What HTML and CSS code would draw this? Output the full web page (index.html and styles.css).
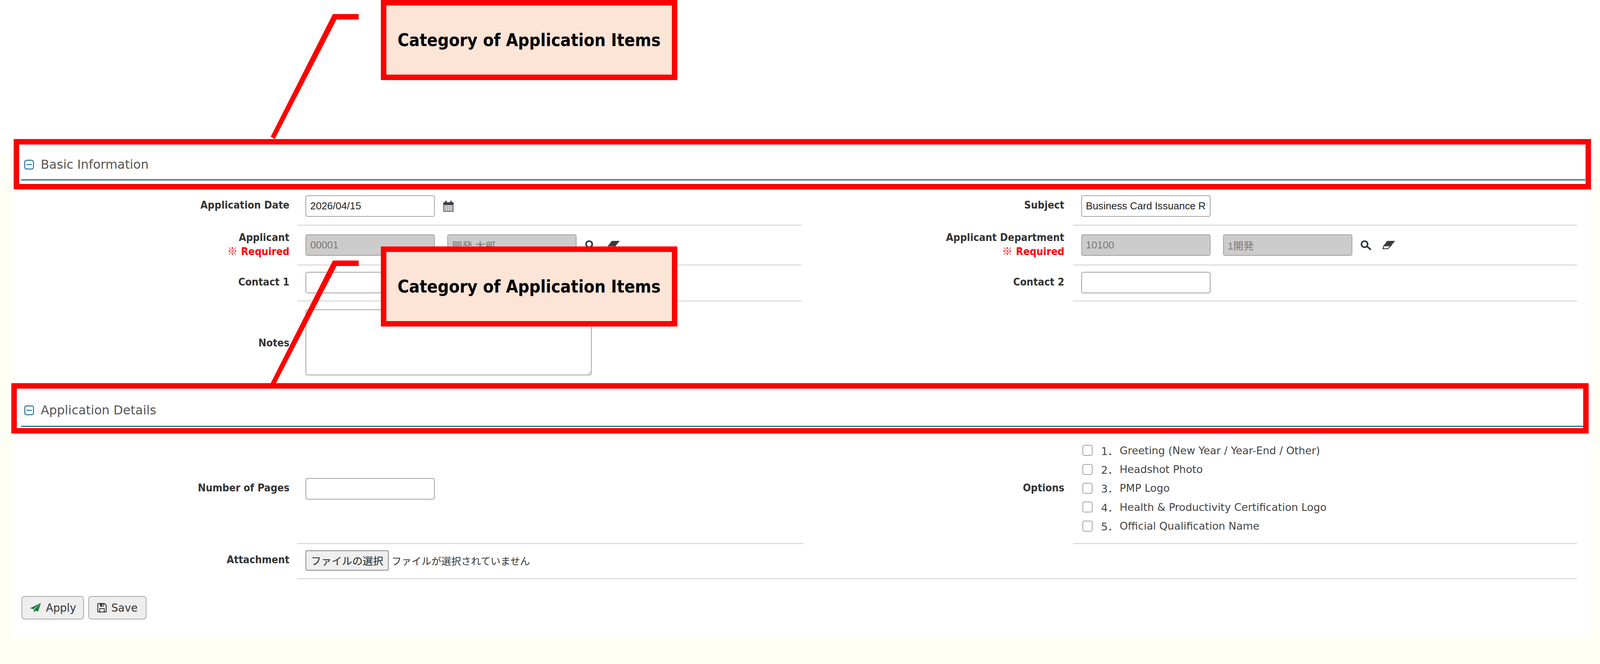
FILE: index.html
```html
<!DOCTYPE html>
<html lang="en">
<head>
<meta charset="utf-8">
<title>Business Card Issuance Request</title>
<link rel="stylesheet" href="styles.css">
</head>
<body>
<div class="top-band"></div>
<main class="sheet">
  <section class="section">
    <h2 class="heading heading-first">
      <svg class="toggle" viewBox="0 0 27 27"><rect x="1.5" y="1.5" width="24" height="24" rx="5"/><path d="M6 13.5h15"/></svg>
      <span>Basic Information</span>
    </h2>
    <div class="row row-a">
      <label class="label lab-date">Application Date</label>
      <div class="field pad-date">
        <input class="input" type="text" value="2026/04/15">
        <svg class="ic-cal" viewBox="0 0 30 31"><path class="cal-head" d="M1 5h5V1h4v4h10V1h4v4h5v8H1z"/><rect class="cal-body" x="2" y="12" width="26" height="18"/><path class="cal-grid" d="M2 16.500h26M2 21h26M2 25.500h26M7.500 12v18M13 12v18M18.500 12v18M24 12v18"/></svg>
      </div>
      <label class="label label-right lab-date">Subject</label>
      <div class="field pad-date">
        <input class="input" type="text" value="Business Card Issuance Request">
      </div>
    </div>
    <div class="row row-a">
      <label class="label lab-two">Applicant<span class="req"><span class="req-mark">※</span> Required</span></label>
      <div class="field pad-two">
        <input class="input" type="text" value="00001" disabled>
        <input class="input input-second" type="text" value="開発 太郎" disabled>
        <svg class="ic-search" viewBox="0 0 30 27"><circle cx="11" cy="11" r="8.500"/><path d="M17.500 17l9.500 8"/></svg>
        <svg class="ic-eraser" viewBox="0 0 35 23"><path class="er-top" d="M13 0h22L24 13H3z"/><path class="er-low" d="M4 13.500h19L15 21.500H1.500z"/></svg>
      </div>
      <label class="label label-right lab-two">Applicant Department<span class="req"><span class="req-mark">※</span> Required</span></label>
      <div class="field pad-two">
        <input class="input" type="text" value="10100" disabled>
        <input class="input input-second" type="text" value="1開発" disabled>
        <svg class="ic-search" viewBox="0 0 30 27"><circle cx="11" cy="11" r="8.500"/><path d="M17.500 17l9.500 8"/></svg>
        <svg class="ic-eraser" viewBox="0 0 35 23"><path class="er-top" d="M13 0h22L24 13H3z"/><path class="er-low" d="M4 13.500h19L15 21.500H1.500z"/></svg>
      </div>
    </div>
    <div class="row row-a">
      <label class="label lab-contact">Contact 1</label>
      <div class="field pad-contact"><input class="input" type="text"></div>
      <label class="label label-right lab-contact">Contact 2</label>
      <div class="field pad-contact"><input class="input" type="text"></div>
    </div>
    <div class="row row-a">
      <label class="label lab-notes">Notes</label>
      <div class="field field-plain pad-notes"><textarea class="textarea"></textarea></div>
    </div>
  </section>

  <section class="section">
    <h2 class="heading heading-second">
      <svg class="toggle" viewBox="0 0 27 27"><rect x="1.5" y="1.5" width="24" height="24" rx="5"/><path d="M6 13.5h15"/></svg>
      <span>Application Details</span>
    </h2>
    <div class="row row-b">
      <label class="label lab-pages">Number of Pages</label>
      <div class="field pad-pages"><input class="input" type="text"></div>
      <label class="label label-right lab-pages">Options</label>
      <div class="field field-options">
        <label class="option"><input class="check" type="checkbox"><span class="num">1．</span>Greeting (New Year / Year-End / Other)</label>
        <label class="option"><input class="check" type="checkbox"><span class="num">2．</span>Headshot Photo</label>
        <label class="option"><input class="check" type="checkbox"><span class="num">3．</span>PMP Logo</label>
        <label class="option"><input class="check" type="checkbox"><span class="num">4．</span>Health &amp; Productivity Certification Logo</label>
        <label class="option"><input class="check" type="checkbox"><span class="num">5．</span>Official Qualification Name</label>
      </div>
    </div>
    <div class="row row-b">
      <label class="label lab-attach">Attachment</label>
      <div class="field field-wide pad-attach">
        <button class="file-btn" type="button">ファイルの選択</button>
        <span class="file-text">ファイルが選択されていません</span>
      </div>
    </div>
  </section>

  <div class="actions">
    <button class="btn btn-apply" type="button">
      <svg class="ic-plane" viewBox="0 0 31 28"><path d="M31 0L0 15l9 3.500z"/><path d="M31 0L11 19.500V28l4.500-6 7 3z"/></svg>
      Apply
    </button>
    <button class="btn btn-save" type="button">
      <svg class="ic-save" viewBox="0 0 26 26"><path class="sv-o" d="M3 1.500h16.500L24.500 6.500V23a1.500 1.500 0 0 1-1.500 1.500H3A1.500 1.500 0 0 1 1.500 23V3A1.500 1.500 0 0 1 3 1.500z"/><path class="sv-f" d="M7 2h11v8H7zM5.500 14h15v10h-15z"/><path class="sv-w" d="M13.500 3.500h2.500v5h-2.500zM8 16.500h10v7H8z"/></svg>
      Save
    </button>
  </div>
</main>

<aside class="note note-one">
  <svg class="leader" viewBox="0 0 243 320" preserveAspectRatio="none"><polygon points="171,0 242,0 242,14 181,14 11,320 0,314"/></svg>
  <div class="callout">Category of Application Items</div>
</aside>
<div class="frame frame-one"></div>
<aside class="note note-two">
  <svg class="leader" viewBox="0 0 243 320" preserveAspectRatio="none"><polygon points="171,0 242,0 242,14 181,14 11,320 0,314"/></svg>
  <div class="callout">Category of Application Items</div>
</aside>
<div class="frame frame-two"></div>
</body>
</html>
```
FILE: styles.css
```css
/* The brief states a 4400px window, but the sandbox reports a 4096px viewport.
   Horizontal measures and font sizes are written in 4400ths of the viewport width
   so the page is exact at 4400 and is not clipped at 4096. */
:root { --u: calc(100vw / 4400); }
* { box-sizing: border-box; }
html, body { margin: 0; padding: 0; }
body {
  position: relative;
  width: 100vw;
  height: 1700px;
  overflow: hidden;
  background: #fffff6;
  color: #333;
  font-family: "DejaVu Sans", "Noto Sans CJK JP", sans-serif;
}
.top-band { height: 389px; background: #fff; }
.sheet {
  width: calc(4344 * var(--u));
  height: 1244px;
  margin-left: calc(36 * var(--u));
  padding: 0 calc(21 * var(--u)) 0 calc(22 * var(--u));
  background: #fff;
}
.heading {
  display: flex;
  align-items: center;
  gap: calc(18 * var(--u));
  margin: 0;
  height: 27px;
  box-sizing: content-box;
  border-bottom: 3px solid #22708f;
  font-size: calc(33.9 * var(--u));
  font-weight: 400;
  line-height: 27px;
  color: #555;
  padding-left: calc(9 * var(--u));
}
.heading-first { padding-top: 19px; padding-bottom: 24px; }
.heading-second { padding-top: 76px; padding-bottom: 26px; }
.toggle { width: calc(27 * var(--u)); height: 27px; flex: none; fill: none; stroke: #1d7296; stroke-width: 2.6; }

.row { display: grid; }
.row-a { grid-template-columns: calc(760 * var(--u)) calc(1386 * var(--u)) calc(747 * var(--u)) calc(1386 * var(--u)); }
.row-b { grid-template-columns: calc(760 * var(--u)) calc(1392 * var(--u)) calc(741 * var(--u)) calc(1386 * var(--u)); }

.label {
  display: flex;
  flex-direction: column;
  justify-content: flex-start;
  padding-right: calc(22 * var(--u));
  text-align: right;
  font-family: "DejaVu Sans Condensed", "DejaVu Sans", "Noto Sans CJK JP", sans-serif;
  font-stretch: condensed;
  font-weight: 700;
  font-size: calc(29 * var(--u));
  line-height: 34px;
  color: #333;
}
.label-right { padding-right: calc(24 * var(--u)); }
.req { color: #f00; }
.req-mark { font-family: "Noto Sans CJK JP", sans-serif; font-weight: 400; }

.field {
  display: flex;
  align-items: flex-start;
  padding-left: calc(22 * var(--u));
  border-bottom: 3px solid #ddd;
}
.field-plain { border-bottom: 0; }
.field-wide { grid-column: 2 / 5; }

.lab-date { padding-top: 46px; }
.pad-date { padding-top: 38px; height: 116px; }
.lab-two { padding-top: 13px; }
.pad-two { padding-top: 22px; height: 102px; }
.lab-contact { padding-top: 25px; }
.pad-contact { padding-top: 16px; height: 92px; }
.lab-notes { padding-top: 89px; }
.pad-notes { padding-top: 20px; }
.lab-pages { padding-top: 139px; }
.pad-pages { padding-top: 131px; height: 300px; }
.lab-attach { padding-top: 23px; }
.pad-attach { padding-top: 16px; height: 90px; }

.input {
  width: calc(356 * var(--u));
  height: 55px;
  flex: none;
  padding: 0 calc(11 * var(--u));
  border: 2.5px solid #a3a3a3;
  border-radius: 5px;
  background: #fff;
  color: #222;
  font-family: "Liberation Sans", "Noto Sans CJK JP", sans-serif;
  font-size: calc(28 * var(--u));
}
.input:disabled { background: #ccc; color: #777; }
.input-second { margin-left: calc(34 * var(--u)); }
.textarea {
  display: block;
  width: calc(788 * var(--u));
  height: 169px;
  border: 2.5px solid #a3a3a3;
  border-radius: 5px;
  background: #fff;
}

.ic-cal { width: calc(30 * var(--u)); height: 31px; margin: 12px 0 0 calc(22 * var(--u)); flex: none; }
.cal-head { fill: #3c3f44; }
.cal-body { fill: #eef1f4; stroke: #3c3f44; stroke-width: 2; }
.cal-grid { fill: none; stroke: #838d96; stroke-width: 1.3; }

.ic-search { width: calc(30 * var(--u)); height: 27px; margin: 14px 0 0 calc(23 * var(--u)); flex: none; fill: none; stroke: #2f3a45; stroke-width: 4.5; stroke-linecap: round; }
.ic-eraser { width: calc(35 * var(--u)); height: 23px; margin: 16px 0 0 calc(30 * var(--u)); flex: none; }
.er-top { fill: #3b3b3b; }
.er-low { fill: #fff; stroke: #3b3b3b; stroke-width: 2.4; }

.field-options {
  display: flex;
  flex-direction: column;
  padding-top: 36px;
  height: 300px;
  padding-left: calc(26 * var(--u));
}
.option {
  display: flex;
  align-items: center;
  height: 48.4px;
  flex: none;
  font-size: calc(28.8 * var(--u));
  color: #444;
}
.check {
  appearance: none;
  width: calc(28 * var(--u));
  height: 28px;
  margin: 0 calc(23 * var(--u)) 0 0;
  border: 2.5px solid #a3a3a3;
  border-radius: 5px;
  background: #fff;
  flex: none;
}
.num { width: calc(51 * var(--u)); flex: none; }

.file-btn {
  width: calc(229 * var(--u));
  height: 52px;
  padding: 0;
  flex: none;
  border: 2.5px solid #8a8a8a;
  border-radius: 4px;
  background: #efefef;
  color: #222;
  font-family: "Noto Sans CJK JP", sans-serif;
  font-size: calc(28.5 * var(--u));
  line-height: 1;
}
.file-text {
  margin-left: calc(8 * var(--u));
  font-family: "Noto Sans CJK JP", sans-serif;
  font-size: calc(27.3 * var(--u));
  line-height: 52px;
  color: #333;
}

.actions { display: flex; gap: calc(12 * var(--u)); padding: 43px 0 0 calc(1 * var(--u)); }
.btn {
  display: flex;
  align-items: center;
  height: 60px;
  padding: 0;
  border: 2.5px solid #aaa;
  border-radius: 8px;
  background: #eee;
  color: #333;
  font-family: "DejaVu Sans", sans-serif;
  font-size: calc(29.5 * var(--u));
}
.btn-apply { width: calc(172 * var(--u)); padding-left: calc(22 * var(--u)); gap: calc(13 * var(--u)); }
.btn-save { width: calc(160 * var(--u)); padding-left: calc(22 * var(--u)); gap: calc(13 * var(--u)); }
.ic-plane { width: calc(30 * var(--u)); height: 28px; flex: none; fill: #1e7a3c; }
.ic-save { width: calc(26 * var(--u)); height: 26px; flex: none; }
.sv-o { fill: #fff; stroke: #333; stroke-width: 2.6; }
.sv-f { fill: #333; }
.sv-w { fill: #fff; }

/* annotations laid over the screenshot */
.note { position: absolute; left: calc(744 * var(--u)); width: calc(1119 * var(--u)); }
.note-one { top: 0; height: 356px; }
.note-two { top: 631px; height: 350px; }
.leader { position: absolute; left: 0; top: 36px; width: calc(243 * var(--u)); height: 320px; fill: #f00; }
.callout {
  position: absolute;
  left: calc(303 * var(--u));
  top: 0;
  display: flex;
  align-items: center;
  justify-content: center;
  width: calc(816 * var(--u));
  height: 205px;
  border: 14px solid #f00;
  background: #fce4d6;
  color: #000;
  font-family: "DejaVu Sans Condensed", "DejaVu Sans", sans-serif;
  font-stretch: condensed;
  font-weight: 700;
  font-size: calc(47.8 * var(--u));
}
.frame { position: absolute; border: 14px solid #f00; }
.frame-one { left: calc(38 * var(--u)); top: 356px; width: calc(4337 * var(--u)); height: 129px; }
.frame-two { left: calc(31 * var(--u)); top: 981px; width: calc(4338 * var(--u)); height: 129px; }
```
